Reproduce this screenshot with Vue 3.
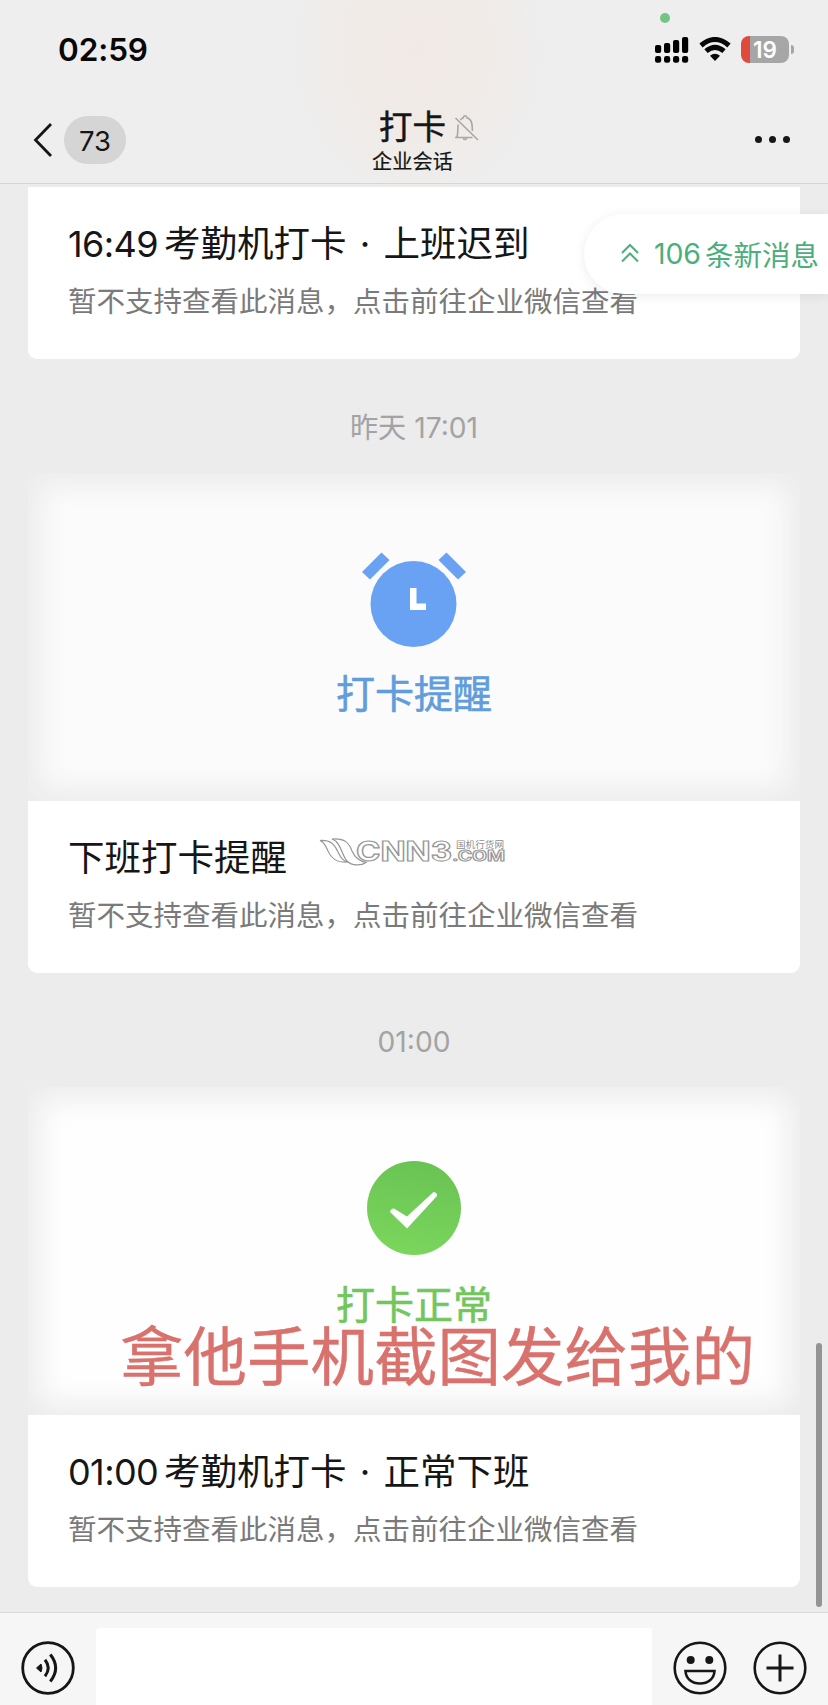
<template>
    <div class="phone">
        <header class="top">
            <span class="cam-dot"></span>
            <div class="status">
                <span class="clock">02:59</span>
                <div class="status-icons">
                    <svg class="signal" width="34" height="27" viewBox="0 0 34 27">
                        <rect x="0" y="9" width="6.2" height="8" rx="2" />
                        <rect x="9" y="7" width="6.2" height="10" rx="2" />
                        <rect x="18" y="4" width="6.2" height="13" rx="2" />
                        <rect x="27" y="1" width="6.2" height="16" rx="2" />
                        <rect v-for="x in [0, 9, 18, 27]" :key="x" :x="x" y="20" width="6.2" height="6.8" rx="2.4" />
                    </svg>
                    <svg class="wifi" width="32" height="25" viewBox="0 0 32 25">
                        <path d="M2 8.5 Q16 -3.5 30 8.5" />
                        <path d="M7 14.2 Q16 6.4 25 14.2" />
                        <path class="solid" d="M16 24 L11 18.8 Q16 14.6 21 18.8 Z" />
                    </svg>
                    <div class="battery"><span>19</span></div>
                    <span class="nub"></span>
                </div>
            </div>
            <div class="nav">
                <div class="nav-left">
                    <svg width="20" height="36" viewBox="0 0 20 36">
                        <path d="M18 2 L2.5 18 L18 34" fill="none" stroke="#161616" stroke-width="2.8" />
                    </svg>
                    <span class="unread">73</span>
                </div>
                <div class="nav-title">
                    <div class="name">
                        <span>打卡</span>
                        <svg width="26" height="28" viewBox="0 0 26 28" fill="none" stroke="#a9a6a5" stroke-width="1.6">
                            <path d="M2 23.5 H19.5 M4 23 C5.3 19 4.5 14 5.2 10.5 M7.5 6 C8.3 4.7 9.3 4.2 10.3 3.8 C10.6 1 13.6 1 14 3.8 C19 5.5 19.3 10 19.4 17" />
                            <path d="M10 24.5 Q12 26.5 14 24.5" />
                            <path d="M2.5 4 L25 26" />
                        </svg>
                    </div>
                    <div class="sub">企业会话</div>
                </div>
                <div class="more"><i></i><i></i><i></i></div>
            </div>
        </header>

        <main class="chat">
            <template v-for="(msg, i) in messages" :key="i">
                <div v-if="msg.date" class="date">{{ msg.date }}</div>
                <section class="card">
                    <div v-if="msg.kind" class="cover" :class="msg.kind">
                        <svg v-if="msg.kind === 'remind'" width="108" height="96" viewBox="0 0 108 96">
                            <circle cx="53.5" cy="52" r="43" fill="#69a2f3" />
                            <path d="M2 20 L21.5 0.5 L29.5 8 L10 27.5 Z M106 20 L86.5 0.5 L78.5 8 L98 27.5 Z" fill="#69a2f3" />
                            <path d="M50 36 h6.5 v15.5 h9.5 v6.5 h-16 Z" fill="#fff" />
                        </svg>
                        <svg v-else width="96" height="96" viewBox="0 0 96 96">
                            <defs>
                                <linearGradient id="ok" x1="0.6" y1="0" x2="0.4" y2="1">
                                    <stop offset="0" stop-color="#69c354" />
                                    <stop offset="1" stop-color="#7ad65c" />
                                </linearGradient>
                            </defs>
                            <circle cx="48" cy="48" r="47" fill="url(#ok)" />
                            <path d="M24 52 Q24.5 48.500 28 48.500 L41 56.500 L67.500 32 Q71.500 32.500 71 36 L41 68.500 Z" fill="#fff" />
                        </svg>
                        <strong>{{ msg.label }}</strong>
                    </div>
                    <div class="body">
                        <h3>
                            <template v-if="msg.time"><span class="num">{{ msg.time }}</span>考勤机打卡<span class="sep">·</span></template>{{ msg.title }}
                        </h3>
                        <p>暂不支持查看此消息，点击前往企业微信查看</p>
                    </div>
                </section>
            </template>

            <div class="new-msg">
                <svg width="18" height="20" viewBox="0 0 18 20" fill="none" stroke="#4bae7b" stroke-width="2">
                    <path d="M1 10 L9 2 L17 10 M1 18.5 L9 10.5 L17 18.5" />
                </svg>
                <span class="count">106</span><span>条新消息</span>
            </div>

            <!-- водяной знак поверх карточки -->
            <svg class="watermark" width="192" height="32" viewBox="0 0 192 32">
                <g fill="#fff" stroke="#969696" stroke-width="1.2">
                    <path d="M2 3.5 C13 3 16 7 20 15 C23 21 25 24 30 25 C20 26 14 23 10 14 C8 9 6 5 2 3.5 Z" />
                    <path d="M14 2 C27 1 31 6 34 14 C37 21 41 24 48 25.5 C43 29 34 29 29 24 C24 19 23 5 14 2 Z" />
                    <text class="wm-big" x="38" y="23.5" textLength="96" lengthAdjust="spacingAndGlyphs">CNN3</text>
                    <text class="wm-com" x="134" y="23.5" textLength="53" lengthAdjust="spacingAndGlyphs">.COM</text>
                </g>
                <text class="wm-cn" x="138" y="10.5" textLength="48" lengthAdjust="spacingAndGlyphs">国机行货网</text>
            </svg>

            <div class="note">拿他手机截图发给我的</div>
            <span class="scrollbar"></span>
        </main>

        <footer class="bar">
            <svg width="54" height="54" viewBox="0 0 54 54" fill="none" stroke="#161616" stroke-width="2.8">
                <circle cx="27" cy="27" r="25.3" />
                <path d="M15.5 27 L20 23 Q22 27 20 31 Z" fill="#161616" stroke-width="1" />
                <path d="M24 18.8 Q30.5 27 24 35.2 M29.3 13.5 Q40 27 29.3 40.5" stroke-width="3" />
            </svg>
            <div class="input"></div>
            <svg width="54" height="54" viewBox="0 0 54 54" fill="none" stroke="#161616" stroke-width="2.6">
                <circle cx="27" cy="27" r="25.3" />
                <circle cx="17.7" cy="19" r="4" fill="#161616" stroke="none" />
                <circle cx="36.3" cy="19" r="4" fill="#161616" stroke="none" />
                <path d="M12.5 30 H41.5 C41 38 35 42.5 27 42.5 C19 42.5 13 38 12.5 30 Z" />
            </svg>
            <svg class="plus" width="54" height="54" viewBox="0 0 54 54" fill="none" stroke="#161616" stroke-width="2.6">
                <circle cx="27" cy="27" r="25.3" />
                <path d="M27 13.5 V40.5 M13.5 27 H40.5" stroke-width="3" />
            </svg>
        </footer>
    </div>
</template>

<script setup>
const messages = [
    { time: '16:49', title: '上班迟到' },
    { date: '昨天 17:01', kind: 'remind', label: '打卡提醒', title: '下班打卡提醒' },
    { date: '01:00', kind: 'normal', label: '打卡正常', time: '01:00', title: '正常下班' },
]
</script>

<style>
body {
    margin: 0;
}
</style>

<style scoped>
.phone {
    width: 828px;
    height: 1705px;
    display: flex;
    flex-direction: column;
    overflow: hidden;
    background: #ececec;
    color: #161616;
    font-family: Inter, "Noto Sans CJK SC", sans-serif;
}

.phone svg {
    display: block;
    flex: none;
}

.top {
    position: relative;
    box-sizing: border-box;
    height: 184px;
    flex: none;
    border-bottom: 1px solid #d6d6d6;
    background: radial-gradient(ellipse 125px 150px at 418px 50px, #f1e9e6 0%, #f0ebe8 60%, #eeeeee 100%);
}

.cam-dot {
    position: absolute;
    left: 660px;
    top: 13px;
    width: 10px;
    height: 10px;
    border-radius: 50%;
    background: #74c585;
}

.status {
    height: 99px;
    display: flex;
    justify-content: space-between;
    align-items: center;
    padding: 0 34px 0 58px;
}

.clock {
    font-size: 31.5px;
    font-weight: 600;
    letter-spacing: -0.1px;
    color: #080808;
}

.status-icons {
    display: flex;
    align-items: center;
}

.wifi {
    margin: 0 10px 0 10px;
    fill: none;
    stroke: #080808;
    stroke-width: 5;
}

.wifi .solid {
    fill: #080808;
    stroke: none;
}

.battery {
    width: 48px;
    height: 27px;
    border-radius: 8px;
    background: linear-gradient(90deg, #e04a3c 9px, #a6a6a6 9px);
    color: #fff;
    font-size: 22.5px;
    font-weight: 600;
    line-height: 27px;
    text-align: center;
}

.nub {
    width: 3px;
    height: 9px;
    margin-left: 2px;
    border-radius: 0 4px 4px 0;
    background: #a6a6a6;
}

.nav {
    display: grid;
    grid-template-columns: 1fr 120px 1fr;
    height: 81px;
}

.nav-left {
    display: flex;
    align-items: center;
    padding-left: 33px;
}

.unread {
    width: 62px;
    height: 48px;
    margin-left: 11px;
    border-radius: 24px;
    background: #d5d5d5;
    font-size: 27.5px;
    line-height: 50px;
    text-align: center;
}

.name {
    display: flex;
    align-items: center;
    gap: 7px;
    height: 51px;
    padding: 6px 0 0 25px;
    box-sizing: border-box;
    font-size: 33.5px;
    line-height: 45px;
    white-space: nowrap;
    -webkit-text-stroke: 0.5px #161616;
}

.sub {
    margin-left: -3px;
    font-size: 20.2px;
    line-height: 23px;
    text-align: center;
    -webkit-text-stroke: 0.2px #161616;
}

.more {
    display: flex;
    align-items: center;
    justify-content: flex-end;
    gap: 7px;
    padding-right: 38px;
}

.more i {
    width: 7px;
    height: 7px;
    border-radius: 50%;
    background: #161616;
}

.chat {
    position: relative;
    flex: none;
    height: 1428px;
    padding: 3px 28px 0;
    box-sizing: border-box;
}

.date {
    height: 138px;
    line-height: 138px;
    margin-bottom: -24px;
    font-size: 28.2px;
    text-align: center;
    color: #a3a3a3;
}

.cover {
    height: 328px;
    box-sizing: border-box;
    display: flex;
    flex-direction: column;
    align-items: center;
    background: #fbfbfb;
    box-shadow: inset 0 0 28px 12px #ececec;
}

.cover.remind {
    padding-top: 79px;
}

.cover.normal {
    padding-top: 73px;
    background: #fefefe;
}

.cover strong {
    font-size: 39px;
    font-weight: 400;
    line-height: 50px;
}

.remind strong {
    margin-top: 21px;
    color: #619cdc;
    -webkit-text-stroke: 0.6px #619cdc;
}

.normal strong {
    margin-top: 24px;
    color: #72c65c;
    -webkit-text-stroke: 0.6px #72c65c;
}

.body {
    height: 172px;
    box-sizing: border-box;
    padding: 33px 40px 0;
    border-radius: 0 0 9px 9px;
    background: #fff;
}

.body h3 {
    margin: 0;
    font-size: 36.5px;
    font-weight: 400;
    line-height: 48px;
    white-space: nowrap;
}

.num {
    display: inline-block;
    width: 96px;
    font-size: 36px;
    letter-spacing: -0.6px;
}

.sep {
    display: inline-block;
    width: 37px;
    text-align: center;
}

.body p {
    margin: 12px 0 0;
    font-size: 28.5px;
    line-height: 44px;
    color: #7a7a7a;
    white-space: nowrap;
}

.new-msg {
    position: absolute;
    right: 0;
    top: 30px;
    width: 244px;
    height: 80px;
    box-sizing: border-box;
    padding: 0 0 2px 37px;
    display: flex;
    align-items: center;
    border-radius: 40px 0 0 40px;
    background: #fff;
    box-shadow: 0 2px 12px rgba(0, 0, 0, 0.08);
    color: #4bae7b;
    font-size: 28.5px;
    white-space: nowrap;
}

.count {
    width: 51px;
    margin-left: 15px;
    letter-spacing: -0.2px;
}

.watermark {
    position: absolute;
    left: 318px;
    top: 653px;
}

.wm-big {
    font: 700 27px Inter, sans-serif;
}

.wm-com {
    font: 700 14px Inter, sans-serif;
    stroke-width: 1;
}

.wm-cn {
    font: 9px "Noto Sans CJK SC", sans-serif;
    fill: #8c8c8c;
}

.note {
    position: absolute;
    left: 120px;
    top: 1128px;
    font-size: 63.5px;
    line-height: 90px;
    white-space: nowrap;
    color: #d9716d;
    -webkit-text-stroke: 0.4px #d9716d;
}

.scrollbar {
    position: absolute;
    left: 816px;
    top: 1159px;
    width: 6px;
    height: 264px;
    border-radius: 3px;
    background: #949494;
}

.bar {
    flex: none;
    height: 93px;
    box-sizing: border-box;
    display: flex;
    align-items: flex-start;
    padding: 28px 0 0 21px;
    border-top: 1px solid #d9d9d9;
    background: #f6f6f6;
}

.input {
    width: 556px;
    height: 78px;
    margin: -13px 21px 0;
    border-radius: 4px 4px 0 0;
    background: #fff;
}

.plus {
    margin-left: 26px;
}
</style>
